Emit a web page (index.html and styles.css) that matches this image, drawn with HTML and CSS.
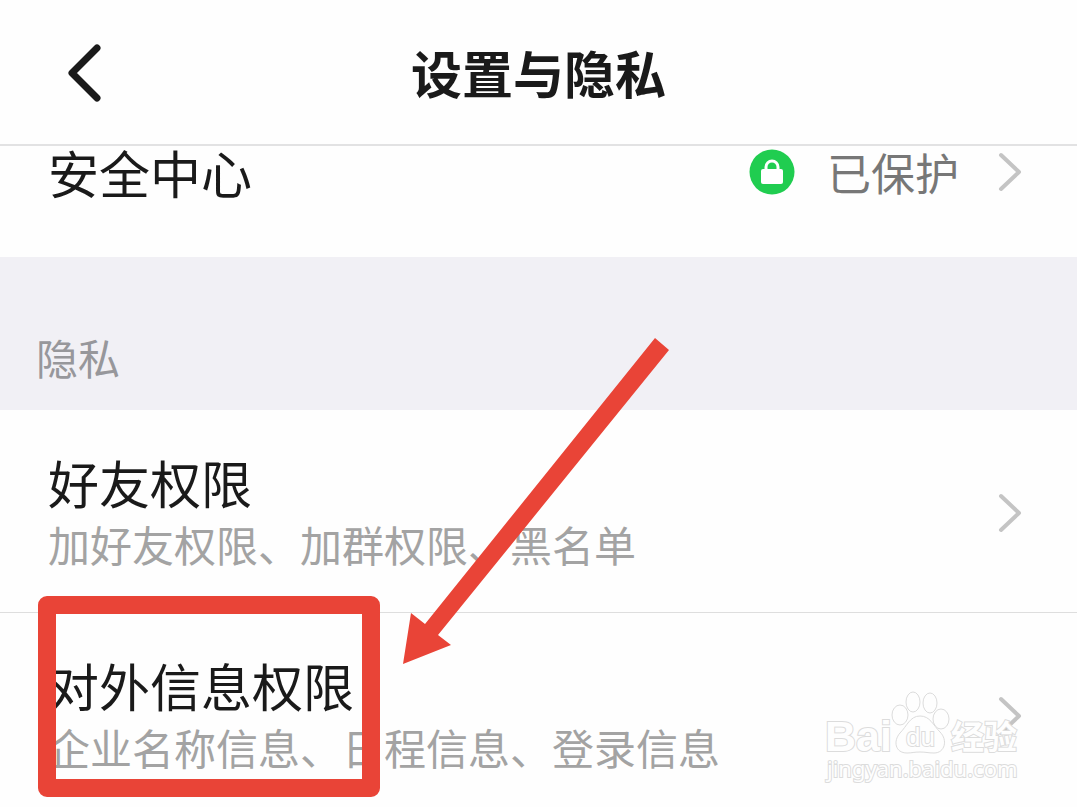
FILE: index.html
```html
<!DOCTYPE html>
<html lang="zh-CN">
  <head>
    <meta charset="UTF-8" />
    <title>设置与隐私</title>
    <meta name="viewport" content="width=device-width, initial-scale=1.0" />
    <link rel="stylesheet" href="styles.css">
  </head>
  <body>
    <header class="topbar">
      <button class="back-btn" type="button" aria-label="返回">
        <svg width="36" height="60" viewBox="0 0 36 60">
          <path d="M31 5 L6 30 L31 55" />
        </svg>
      </button>
      <h1 class="topbar-title">设置与隐私</h1>
    </header>
    <main class="settings">
      <a class="row row-short" href="#">
        <span class="row-title">安全中心</span>
        <span class="row-status">
          <svg width="46" height="46" viewBox="0 0 46 46">
            <circle cx="23" cy="23" r="22.5" fill="#20cd50" />
            <path d="M17 22 V18 a6 6 0 0 1 12 0 V22" fill="none" stroke="#fff" stroke-width="3" />
            <rect x="12" y="20" width="22" height="15" rx="2" fill="#fff" />
          </svg>
          已保护
        </span>
        <svg class="chevron" width="26" height="42" viewBox="0 0 26 42">
          <path d="M4 4 L22 21 L4 38" />
        </svg>
      </a>
      <h2 class="section-title">隐私</h2>
      <a class="row" href="#">
        <span class="row-text">
          <span class="row-title">好友权限</span>
          <span class="row-desc">加好友权限、加群权限、黑名单</span>
        </span>
        <svg class="chevron" width="26" height="42" viewBox="0 0 26 42">
          <path d="M4 4 L22 21 L4 38" />
        </svg>
      </a>
      <a class="row row-marked" href="#">
        <span class="row-text">
          <span class="row-title">对外信息权限</span>
          <span class="row-desc">企业名称信息、日程信息、登录信息</span>
        </span>
        <svg class="chevron" width="26" height="42" viewBox="0 0 26 42">
          <path d="M4 4 L22 21 L4 38" />
        </svg>
        <span class="mark-box"></span>
      </a>
    </main>

    <svg class="mark-arrow" width="266" height="326" viewBox="0 0 266 326">
      <path d="M0 326 L8 275 L22 286 L252 0 L266 12 L35 297 L48 307 Z" />
    </svg>

    <svg class="watermark" width="200" height="96" viewBox="0 0 200 96">
      <text class="wm-latin" x="5" y="61">Bai</text>
      <ellipse cx="80" cy="25" rx="8" ry="10" />
      <ellipse cx="93" cy="12" rx="7" ry="10" />
      <ellipse cx="110" cy="13" rx="7" ry="10" />
      <ellipse cx="121" cy="29" rx="8" ry="10" />
      <path d="M100 26 C110 26 113 35 120 42 C128 50 125 63 114 63 C108 63 106 62 100 62 C94 62 92 63 87 63 C75 63 73 51 80 43 C87 36 90 26 100 26 Z" />
      <text class="wm-du" x="86" y="56">du</text>
      <text class="wm-cn" x="131" y="59">经验</text>
      <text class="wm-url" x="7" y="87">jingyan.baidu.com</text>
    </svg>
  </body>
</html>
```
FILE: styles.css
```css
* {
  box-sizing: border-box;
}
body {
  margin: 0;
  height: 100vh;
  position: relative;
  overflow: hidden;
  background: #fefefe;
  color: #1a1a1a;
  font-family: "Noto Sans CJK SC", sans-serif;
}
.topbar {
  display: grid;
  grid-template-columns: 102px 1fr 102px;
  align-items: center;
  height: 146px;
  border-bottom: 2px solid #e2e2e3;
}
.back-btn {
  display: flex;
  justify-content: flex-end;
  padding: 2px 0 0;
  border: none;
  background: none;
  cursor: pointer;
}
.back-btn path {
  fill: none;
  stroke: #1a1a1a;
  stroke-width: 7;
  stroke-linecap: round;
  stroke-linejoin: round;
}
.topbar-title {
  margin: 0;
  font-size: 51px;
  line-height: 60px;
  font-weight: 700;
  text-align: center;
}
.row {
  position: relative;
  display: flex;
  align-items: center;
  justify-content: space-between;
  padding: 41px 54px 37px 48px;
  color: inherit;
  text-decoration: none;
}
.row + .row {
  border-top: 1px solid #dedede;
}
.row-short {
  padding-top: 0;
  padding-bottom: 59px;
  line-height: 52px;
}
.row-text {
  display: flex;
  flex-direction: column;
  line-height: 62px;
}
.row-title {
  font-size: 51px;
}
.row-desc {
  font-size: 42px;
  color: #a3a3a3;
}
.row-status {
  display: flex;
  align-items: center;
  gap: 32px;
  margin-left: auto;
  margin-right: 38px;
  font-size: 44px;
  color: #777;
}
.chevron {
  flex: none;
}
.chevron path {
  fill: none;
  stroke: #c4c4c4;
  stroke-width: 4;
  stroke-linecap: round;
  stroke-linejoin: round;
}
.section-title {
  margin: 0;
  padding: 69px 36px 23px;
  background: #f1f0f5;
  color: #97979b;
  font-size: 42px;
  line-height: 61px;
  font-weight: 400;
}

/* red highlight over the list */
.mark-box {
  position: absolute;
  left: 38px;
  top: -17px;
  width: 342px;
  height: 201px;
  border: 18px solid #e94437;
  border-radius: 9px;
}
.mark-arrow {
  position: absolute;
  left: 403px;
  top: 338px;
  fill: #e94437;
}

.watermark {
  position: absolute;
  right: 57px;
  top: 690px;
  fill: #fefefe;
  stroke: #dcdcdc;
  stroke-width: 1;
}
.watermark text {
  paint-order: stroke;
  stroke-width: 2;
}
.wm-latin {
  font: bold 43px "Liberation Sans", sans-serif;
}
.wm-du {
  font: 26px "Liberation Sans", sans-serif;
}
.wm-cn {
  font: bold 33px "Noto Sans CJK SC", sans-serif;
}
.wm-url {
  font: 22px "Noto Sans", sans-serif;
}
```
